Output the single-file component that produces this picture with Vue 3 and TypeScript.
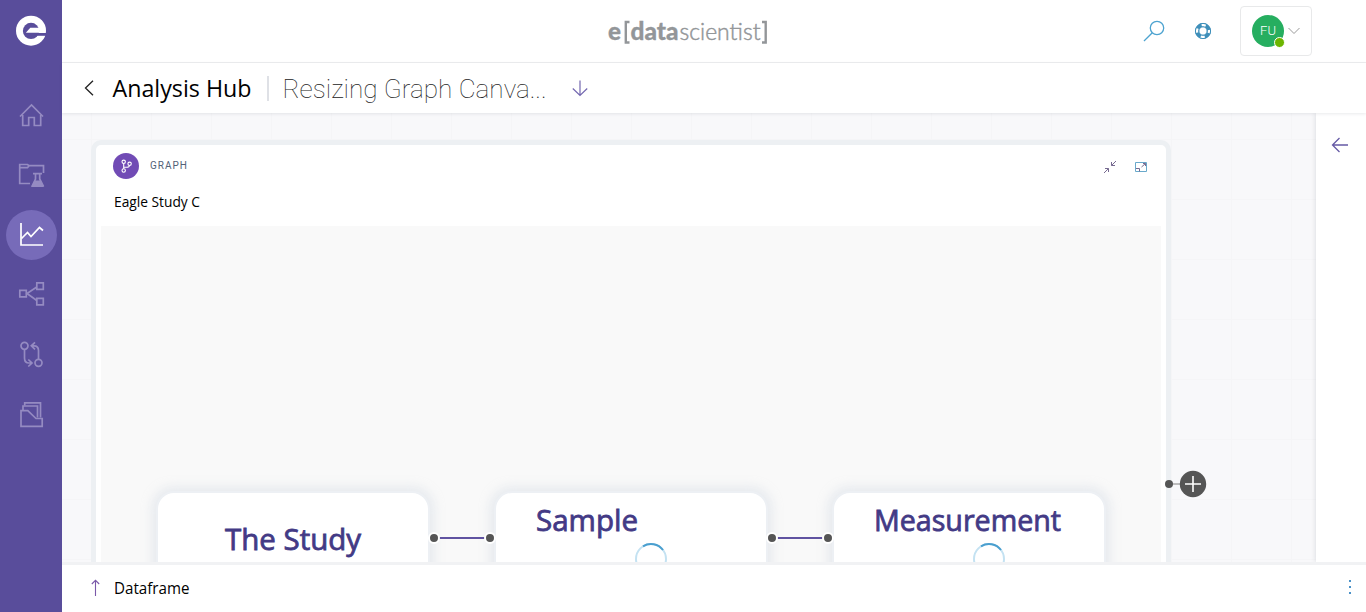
<script setup lang="ts">
interface NavItem {
  name: string
  box: string
  active?: boolean
  paths: string[]
  fill?: string
}
interface StudyNode {
  title: string
  width: number
  loading: boolean
}

const navItems: NavItem[] = [
  { name: 'Home', box: '6 90 51 50', paths: ['M20 116.500L31.500 105L43 116.500', 'M22.700 115V125.500H28.700V117.500H34.300V125.500H40.700V115'] },
  { name: 'Studies', box: '6 150 51 50', paths: ['M30 183.500H19.700V164.500H27.500L29 165.700H43.500V173', 'M20 167.700H27.500L29 165.700', 'M33 173.700H42M35.500 174V179L32.500 185.500H43L39.700 179V174'], fill: 'M34.500 180.500H40.800L44 187H31Z' },
  { name: 'Analysis', box: '6 210 51 50', active: true, paths: ['M21 223V245H43', 'M21.500 238.500L27.500 232.500L31 236.500L39.500 227.500L43 230.500'] },
  { name: 'Network', box: '6 269 51 50', paths: ['M19.800 290.300H26.300V296.800H19.800ZM36.800 282.800H43.300V289.300H36.800ZM36.800 298.300H43.300V304.800H36.800Z', 'M36.800 287L27 293.500L36.800 300.500'] },
  { name: 'Versions', box: '6 329 51 50', paths: ['M28 345.800A3.500 3.500 0 1 1 21 345.800A3.500 3.500 0 1 1 28 345.800M42 362.800A3.500 3.500 0 1 1 35 362.800A3.500 3.500 0 1 1 42 362.800', 'M24.500 349.500V358Q24.500 363 29 363H32M28.300 359.500L32 363L28.300 366.500', 'M38.500 359V350.500Q38.500 345.800 34 345.800H31M35 342.300L31.300 345.800L35 349.300'] },
  { name: 'Files', box: '6 389 51 50', paths: ['M21 411V426.300H42.200V418.500H36L27.800 410.700H21Z', 'M23 410V406H37.500V417.500', 'M24.700 405.500V402.800H40.500V417.500'] },
]

const nodes: StudyNode[] = [
  { title: 'The Study', width: 136, loading: false },
  { title: 'Sample', width: 102, loading: true },
  { title: 'Measurement', width: 187, loading: true },
]
</script>

<template>
  <div class="app">
    <aside class="sidebar">
      <svg class="brand" viewBox="15 14 33 33">
        <circle cx="31" cy="30.700" r="15" class="light" />
        <circle cx="31" cy="30.900" r="8.100" class="dark" />
        <path class="light" d="M25.800 32.800L30.300 27.800H39V32.800Z" />
        <path class="dark" d="M28 33H47V35.800H28Z" />
      </svg>
      <nav class="nav">
        <a v-for="item in navItems" :key="item.name" class="nav-item" :class="{ active: item.active }" :aria-label="item.name">
          <svg :viewBox="item.box">
            <path v-for="d in item.paths" :key="d" :d="d" />
            <path v-if="item.fill" :d="item.fill" class="solid" />
          </svg>
        </a>
      </nav>
    </aside>

    <div class="main">
      <header class="topbar">
        <svg class="wordmark" viewBox="600 10 180 42">
          <text x="608" y="40" class="bold" textLength="13" lengthAdjust="spacingAndGlyphs">e</text>
          <path d="M629.500 22H625.800V42.500H629.500M762 22H765.700V42.500H762" />
          <text x="630.500" y="40" class="bold" textLength="48" lengthAdjust="spacingAndGlyphs">data</text>
          <text x="679.500" y="40" class="thin" textLength="81" lengthAdjust="spacingAndGlyphs">scientist</text>
        </svg>
        <div class="tools">
          <svg class="search" viewBox="1143 20 22 22"><circle cx="1157" cy="28" r="6.700" /><path d="M1152.300 32.700L1144 41" /></svg>
          <svg class="help" viewBox="1194 22 18 18">
            <circle cx="1203" cy="31" r="5.900" class="ring" />
            <circle cx="1203" cy="31" r="5.900" class="gaps" />
            <circle cx="1203" cy="31" r="7.600" class="edge" /><circle cx="1203" cy="31" r="4.200" class="edge" />
          </svg>
          <div class="account">
            <span class="avatar">FU<i class="status"></i></span>
            <svg class="chevron" viewBox="0 0 12 8"><path d="M.5 1L6 6.500L11.500 1" /></svg>
          </div>
        </div>
      </header>

      <div class="titlebar">
        <svg class="back" viewBox="0 0 10 16"><path d="M9 .8L1.500 8L9 15.200" /></svg>
        <svg class="hub" viewBox="0 0 140 40"><text x="0.500" y="24" textLength="139" lengthAdjust="spacingAndGlyphs">Analysis Hub</text></svg>
        <span class="divider"></span>
        <svg class="doc" viewBox="0 0 266 40"><text x="0.500" y="25" textLength="264" lengthAdjust="spacingAndGlyphs">Resizing Graph Canva...</text></svg>
        <svg class="down" viewBox="0 0 16 17"><path d="M8 .5V15.500M.8 8.500L8 15.500L15.200 8.500" /></svg>
      </div>

      <div class="workspace">
        <div class="board">
          <section class="card">
            <div class="card-head">
              <span class="badge">
                <svg viewBox="113 153.500 26 26"><circle cx="123.700" cy="162.300" r="1.700" /><circle cx="123.700" cy="171" r="1.700" /><circle cx="129.600" cy="164.300" r="1.700" /><path d="M123.700 164V169.300M123.700 167.800H126.500Q129.300 167.800 129.500 166" /></svg>
              </span>
              <svg class="kind" viewBox="0 0 40 16"><text x="0" y="11" textLength="37">GRAPH</text></svg>
              <div class="actions">
                <svg viewBox="0 0 14 14"><path class="arrow" d="M13 1L8.500 5.500M8.500 2V5.500H12M1 13L5.500 8.500M2 8.500H5.500V12" /></svg>
                <svg viewBox="0 0 14 14"><path class="frame" d="M1.500 2.500H12.500V11.500H1.500Z" /><path class="inner" d="M2 8.500H5.500V11.500M7.500 7L11.500 3.500M9 3.500H11.500V6" /></svg>
              </div>
            </div>
            <svg class="name" viewBox="0 0 90 20"><text x="0" y="14" textLength="86" lengthAdjust="spacingAndGlyphs">Eagle Study C</text></svg>
            <div class="graph">
              <template v-for="(node, i) in nodes" :key="node.title">
                <div v-if="i" class="link">
                  <svg viewBox="0 0 68 14"><path d="M6 7H62" /><circle cx="6" cy="7" r="5" /><circle cx="62" cy="7" r="5" /></svg>
                </div>
                <div class="node" :class="{ loading: node.loading }">
                  <svg class="title" :viewBox="`0 0 ${node.width} 40`" :style="{ width: node.width + 'px' }">
                    <text x="0" y="30" :textLength="node.width" lengthAdjust="spacingAndGlyphs">{{ node.title }}</text>
                  </svg>
                  <svg v-if="node.loading" class="spinner" viewBox="0 0 34 34"><circle cx="17" cy="17" r="15" /><path d="M9 4.300A15 15 0 0 1 29 8" /></svg>
                </div>
              </template>
            </div>
          </section>
          <svg class="add" viewBox="1164 470 44 28">
            <path class="stem" d="M1169 484H1180" /><circle cx="1169" cy="484" r="4" /><circle cx="1193" cy="484" r="13.200" />
            <path class="plus" d="M1185 484H1201M1193 476V492" />
          </svg>
        </div>
        <aside class="panel">
          <svg viewBox="0 0 18 16"><path d="M1.500 8H17M8.500 1L1.500 8L8.500 15" /></svg>
        </aside>
      </div>

      <footer class="footer">
        <svg class="up" viewBox="0 0 10 18"><path d="M5.500 17V1.500M1.800 5L5.500 1.300L9.200 5" /></svg>
        <svg class="frame-name" viewBox="0 0 80 24"><text x="0" y="17.500" textLength="75.500" lengthAdjust="spacingAndGlyphs">Dataframe</text></svg>
        <span class="menu"><i></i><i></i><i></i></span>
      </footer>
    </div>
  </div>
</template>

<style>
body { margin: 0; overflow: hidden; }
</style>

<style scoped>
* { box-sizing: border-box; }
svg { display: block; fill: none; flex: none; }
.app { display: flex; width: 100vw; height: 612px; overflow: hidden; background: #fff; font-family: Roboto, "Liberation Sans", sans-serif; }
.sidebar { width: 62px; flex: none; background: #594d9b; padding-top: 14px; }
.brand { width: 33px; height: 33px; margin-left: 15px; }
.brand .light { fill: #fff; }
.brand .dark { fill: #594d9b; }
.nav { margin: 43px 0 0 6px; display: flex; flex-direction: column; gap: 9.800px; }
.nav-item { width: 51px; height: 50px; border-radius: 50%; }
.nav-item svg { width: 51px; height: 50px; stroke: #958bc2; stroke-width: 1.700; }
.nav-item .solid { fill: #958bc2; stroke: none; }
.nav-item.active { background: #776bb9; }
.nav-item.active svg { stroke: #fff; }
.main { flex: 1; min-width: 0; display: flex; flex-direction: column; }
.topbar { height: 63px; flex: none; border-bottom: 1px solid #edeeef; display: flex; align-items: flex-start; }
.wordmark { width: 180px; height: 42px; margin: 10px 0 0 538px; font-family: Lato, sans-serif; font-size: 24px; }
.wordmark text { fill: #939699; }
.wordmark .bold { font-weight: 900; stroke: #939699; stroke-width: .3; }
.wordmark .thin { font-weight: 300; stroke: #939699; stroke-width: .5; }
.wordmark path { stroke: #939699; stroke-width: 2.400; }
.tools { display: flex; align-items: center; height: 62px; margin-left: 363px; }
.search { width: 22px; height: 22px; stroke: #4da3d0; stroke-width: 1.300; }
.help { width: 18px; height: 18px; margin-left: 29px; }
.ring { stroke: #3e8fba; stroke-width: 4; }
.gaps { stroke: #fff; stroke-width: 2.600; stroke-dasharray: 4.200 5.067; stroke-dashoffset: 2.100; }
.edge { stroke: #3e8fba; stroke-width: 1; }
.account { width: 72px; height: 50px; margin-left: 28px; border: 1px solid #e8e9ea; border-radius: 4px; display: flex; align-items: center; padding-left: 11px; }
.avatar { position: relative; width: 32px; height: 32px; border-radius: 50%; background: #26ae60; color: #fff; font-size: 13px; font-weight: 300; line-height: 32px; text-align: center; }
.status { position: absolute; left: 22px; top: 22px; width: 11px; height: 11px; border-radius: 50%; border: 1.500px solid #fff; background: #6cb500; }
.chevron { width: 12px; height: 8px; margin-left: 4px; stroke: #999; }
.titlebar { height: 50px; flex: none; display: flex; align-items: center; position: relative; z-index: 1; background: #fff; box-shadow: 0 1px 3px rgba(40, 50, 70, .1); }
.back { width: 10px; height: 16px; margin-left: 22px; stroke: #222; stroke-width: 1.300; }
.hub { width: 140px; height: 40px; margin: 10px 0 0 18px; align-self: flex-start; fill: #000; font-family: "Open Sans", sans-serif; font-size: 23.500px; }
.divider { width: 2px; height: 25px; margin-left: 15px; background: #dfe1e6; }
.doc { width: 266px; height: 40px; margin: 10px 0 0 13px; align-self: flex-start; fill: #222; font-size: 25px; font-weight: 100; }
.down { width: 16px; height: 17px; margin-left: 24px; stroke: #7468b0; stroke-width: 1.200; }
.workspace { height: 449px; flex: none; display: flex; overflow: hidden; }
.board { position: relative; flex: 1; padding: 27px 0 0 29px; background-color: #f8f8fa; background-image: linear-gradient(90deg, #f5f5f7 1px, transparent 1px), linear-gradient(#f5f5f7 1px, transparent 1px); background-size: 60px 60px; background-position: 29px 26px; }
.card { width: 1080px; height: 640px; border: 5px solid #edf0f3; border-radius: 10px; background: #fff; }
.card-head { display: flex; padding: 8px 0 0 17px; height: 48px; }
.badge { width: 26px; height: 26px; border-radius: 50%; background: #714bb5; }
.badge svg { width: 26px; height: 26px; stroke: #fff; stroke-width: 1.100; }
.kind { width: 40px; height: 16px; margin: 5px 0 0 11px; fill: #526177; font-size: 10px; }
.actions { display: flex; gap: 17px; margin: 7px 18px 0 auto; }
.actions svg { width: 14px; height: 14px; stroke: #776b91; }
.actions .frame { stroke: #69a9cb; }
.name { width: 90px; height: 20px; margin-left: 18px; fill: #000; font-family: "Open Sans", sans-serif; font-size: 14px; }
.graph { height: 430px; margin: 13px 5px 0; padding: 265px 0 0 55px; background: #f9f9f9; display: flex; align-items: flex-start; }
.node { width: 274px; height: 180px; flex: none; border: 2px solid #edf0f4; border-radius: 18px; background: #fff; box-shadow: 0 0 10px 5px rgba(218, 224, 232, .5); padding-top: 27px; }
.node.loading { padding-top: 8px; }
.title { height: 40px; margin: 0 auto; fill: #433a85; stroke: #433a85; stroke-width: .8; font-family: "Open Sans", sans-serif; font-size: 29px; overflow: visible; }
.loading .title { margin-left: 40px; }
.spinner { width: 34px; height: 34px; margin: 1px 0 0 138px; stroke-width: 2; stroke: #c4e2f2; }
.spinner path { stroke: #4a9fcf; }
.link { width: 64px; flex: none; position: relative; z-index: 1; }
.link svg { width: 68px; height: 14px; margin: 40px 0 0 -2px; stroke: #6053a1; stroke-width: 2; }
.link circle { fill: #555; stroke: #fff; stroke-width: 2; }
.add { position: absolute; left: 1102px; top: 357px; width: 44px; height: 28px; fill: #555; }
.stem { stroke: #aaa; stroke-width: 1.500; }
.plus { stroke: #fff; stroke-width: 1.600; }
.panel { width: 50px; flex: none; background: #fff; box-shadow: 0 0 5px rgba(40, 50, 70, .16); z-index: 0; padding: 24px 0 0 15px; }
.panel svg { width: 18px; height: 16px; stroke: #665aa5; stroke-width: 1.300; }
.footer { height: 50px; border-top: 3px solid #f1f2f4; display: flex; align-items: center; position: relative; z-index: 2; background: #fff; }
.up { width: 10px; height: 18px; margin: -2px 0 0 28px; stroke: #7a58a9; stroke-width: 1.100; }
.frame-name { width: 80px; height: 24px; margin: -1px 0 0 14px; fill: #000; font-family: "Open Sans", sans-serif; font-size: 15.500px; }
.menu { margin: -3px 15px 0 auto; display: flex; flex-direction: column; gap: 4px; }
.menu i { width: 2px; height: 2px; background: #4a91c7; }
</style>
